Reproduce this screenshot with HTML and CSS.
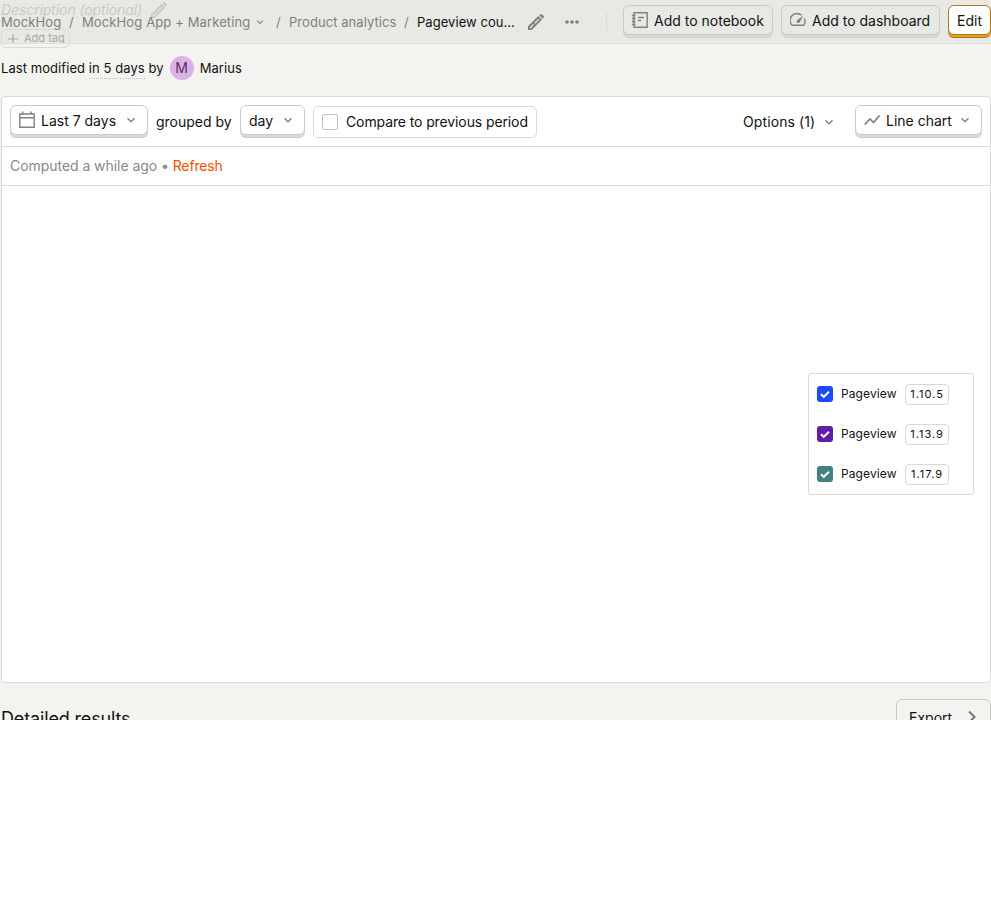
FILE: index.html
```html
<!DOCTYPE html>
<html lang="en">
<head>
<meta charset="utf-8">
<title>Pageview count</title>
<link rel="stylesheet" href="styles.css">
</head>
<body>
<svg class="defs" aria-hidden="true">
  <symbol id="chev" viewBox="0 0 24 24"><path d="M5 8.500l7 7 7-7" fill="none" stroke="currentColor" stroke-width="2.600"/></symbol>
  <symbol id="pencil" viewBox="0 0 24 24"><path fill="currentColor" fill-rule="evenodd" d="M0 18.500L15.500 3l5.500 5.500L5.500 24H0zM2.700 20v1.300H4L9 16.300l-1.300-1.300zM9.500 13.200l1.300 1.300 6.400-6.200-1.400-1.300zM16.800 2.200L18.500.6q1.200-1 2.400 0L23.400 3.100q1.200 1.200 0 2.400L21.800 7.200z"/></symbol>
</svg>
<div class="app">
  <header class="topbar">
    <nav class="crumbs">
      <a class="c1">MockHog</a><i>/</i>
      <a class="c2"><span>MockHog App + Marketing</span><svg class="chev small"><use href="#chev"/></svg></a><i>/</i>
      <a class="c3">Product analytics</a><i>/</i>
      <b>Pageview cou...</b>
    </nav>
    <svg class="edit-name"><use href="#pencil"/></svg>
    <svg class="more" viewBox="0 0 14 4"><circle cx="2" cy="2" r="1.800"/><circle cx="7" cy="2" r="1.800"/><circle cx="12" cy="2" r="1.800"/></svg>
    <span class="divider"></span>
    <button class="btn notebook"><svg class="ic" viewBox="0 0 16 16"><path d="M2 .7h13.200v14.600H2zM0 3.500h3.500M0 6.500h3.500M0 9.500h3.500M0 12.500h3.500M6 5.500h6M6 8.500h3"/></svg><span>Add to notebook</span></button>
    <button class="btn dashboard"><svg class="ic" viewBox="0 0 16 16"><path d="M11.500 3.300A6.800 6.800 0 0 0 2.200 13.300h11.600A6.800 6.800 0 0 0 14.400 6.500"/><path class="solid" d="M13.500 3.500L9.500 10.400A1.500 1.500 0 1 1 7.100 8.200z"/></svg><span>Add to dashboard</span></button>
    <button class="btn primary"><span>Edit</span></button>
  </header>

  <main>
    <section class="meta">
      <div class="description"><em>Description (optional)</em><svg><use href="#pencil"/></svg></div>
      <div class="tag"><svg viewBox="0 0 10 10"><path d="M5 0v10M0 5h10"/></svg><span>Add tag</span></div>
      <div class="modified"><span>Last modified <u>in 5 days</u> by</span><span class="avatar">M</span><span>Marius</span></div>
    </section>

    <section class="card">
      <div class="filters">
        <button class="btn range"><svg class="ic cal" viewBox="0 0 16 18"><path d="M.8 3h14.400v13.200H.8zM.8 6.800h14.400M3.800 .5V3M12.200 .5V3"/></svg><span>Last 7 days</span><svg class="chev"><use href="#chev"/></svg></button>
        <span class="grouped">grouped by</span>
        <button class="btn day"><span>day</span><svg class="chev"><use href="#chev"/></svg></button>
        <label class="compare"><span class="box"></span><span>Compare to previous period</span></label>
        <div class="options"><span>Options (1)</span><svg class="chev"><use href="#chev"/></svg></div>
        <button class="btn chart"><svg class="ic line" viewBox="0 0 16 12"><path d="M.7 10.500L6 5l3.500 3.500L15.500 1.500"/></svg><span>Line chart</span><svg class="chev"><use href="#chev"/></svg></button>
      </div>
      <div class="computed"><span>Computed a while ago</span> <span class="dot">•</span> <a>Refresh</a></div>
      <div class="canvas">
        <ul class="legend">
          <li><span class="check blue"><svg viewBox="0 0 16 16"><path d="M4 8.200l2.700 2.700L12 5.700"/></svg></span><span>Pageview</span><code>1.10.5</code></li>
          <li><span class="check purple"><svg viewBox="0 0 16 16"><path d="M4 8.200l2.700 2.700L12 5.700"/></svg></span><span>Pageview</span><code>1.13.9</code></li>
          <li><span class="check teal"><svg viewBox="0 0 16 16"><path d="M4 8.200l2.700 2.700L12 5.700"/></svg></span><span>Pageview</span><code>1.17.9</code></li>
        </ul>
      </div>
    </section>

    <section class="details">
      <h2>Detailed results</h2>
      <button class="btn export"><span>Export</span><svg viewBox="0 0 8 14"><path d="M1 1.500L6.500 7 1 12.500"/></svg></button>
    </section>
  </main>
</div>
</body>
</html>
```

FILE: styles.css
```css
* { box-sizing: border-box; }
body { margin: 0; background: #fff; color: #111; font: 14px/20px Inter, sans-serif; }
svg { display: block; flex: none; }
.defs { position: absolute; width: 0; height: 0; }
.app { position: relative; height: 720px; overflow: hidden; background: #f3f4ef; }
.topbar { position: absolute; z-index: 2; top: 0; left: 0; right: 0; height: 44px; padding: 5px 0 0 1px; display: flex; align-items: flex-start; border-bottom: 1px solid #dfe0da; }
.crumbs { display: flex; width: 515px; margin-top: 7px; font-size: 13px; letter-spacing: .12px; color: #7f807c; white-space: nowrap; }
.crumbs i { font-style: normal; width: 21px; text-align: center; }
.crumbs b { font-weight: 400; color: #111; letter-spacing: .05px; }
.c1 { width: 60px; }
.c2 { width: 186px; display: flex; align-items: center; }
.c2 span { width: 168px; }
.c3 { width: 107px; letter-spacing: .06px; }
.chev { width: 12px; height: 12px; color: #808080; }
.chev.small { width: 10px; height: 10px; margin-left: 5px; }
.edit-name { width: 16px; height: 16px; margin: 9px 0 0 12px; color: #7f807c; }
.more { width: 14px; height: 4px; margin: 15px 0 0 21px; fill: #7f807c; }
.divider { width: 1px; height: 17px; margin: 8px 16px 0 27px; background: #d8d9d3; }
.btn { display: flex; align-items: center; flex: none; height: 30px; margin: 0; padding: 0 8px; border: 1px solid #c9cac8; border-radius: 6px; background: #fff; color: #111; font: 14px/20px Inter, sans-serif; white-space: nowrap; }
.btn span { padding-top: 2px; }
.topbar .btn { background: #e8e9e4; box-shadow: 0 2px 0 #dcdad9, 0 3px 0 #cfd0cc; }
.ic { width: 16px; height: 16px; margin-right: 6px; fill: none; stroke: #808080; stroke-width: 1.400; }
.ic .solid { fill: #808080; stroke: none; }
.topbar .notebook { width: 150px; }
.topbar .dashboard { width: 159px; margin-left: 8px; }
.topbar .primary { width: 43px; margin-left: 8px; background: #fff; border-color: #b17816; box-shadow: 0 2px 0 #e99b23, 0 3px 0 #b17816; }

.meta { height: 96px; padding-left: 1px; }
.meta::before { content: ""; position: absolute; left: 0; right: 0; top: 0; height: 43px; background: #e8e9e4; }
.description { position: relative; display: flex; height: 20px; color: #c8c9c4; align-items: center; }
.description em { width: 141px; white-space: nowrap; letter-spacing: -.1px; }
.description svg { width: 16px; height: 16px; margin-left: 9px; }
.tag { position: relative; display: flex; align-items: center; width: 69px; height: 19px; margin-top: 9px; padding-left: 6px; border: 1px solid #d9dad4; border-radius: 5px; color: #a7a8a3; font-size: 11px; line-height: 13px; }
.tag svg { width: 10px; height: 10px; margin-right: 6px; stroke: #a7a8a3; stroke-width: 1.200; fill: none; }
.tag span { height: 13px; overflow: hidden; }
.modified { display: flex; align-items: center; height: 24px; margin-top: 8px; font-size: 13px; letter-spacing: .07px; }
.modified u { text-decoration: none; display: inline-block; line-height: 19px; border-bottom: 1px dotted #c4c5c0; }
.avatar { width: 24px; height: 24px; margin: 0 6px; border-radius: 50%; background: #dcb1e3; color: #572e5e; font-size: 14px; line-height: 24px; text-align: center; }
.card { height: 587px; margin-left: 1px; border: 1px solid #d9dad3; border-radius: 4px; background: #fff; overflow: hidden; }
.filters { display: flex; height: 50px; padding: 8px 8px 0; border-bottom: 1px solid #d9dad3; }
.filters .btn { box-shadow: 0 2px 0 #dcd9dc, 0 3px 0 #c9cac8; }
.filters .btn .chev { margin: 0 2px 0 auto; }
.filters .range { width: 138px; }
.ic.cal { height: 18px; margin-right: 6px; }
.filters .day { width: 65px; }
.grouped { width: 76px; margin: 7px 8px 0; white-space: nowrap; }
.compare { display: flex; align-items: center; width: 224px; height: 32px; margin: 1px 0 0 8px; padding-left: 8px; border: 1px solid #d9dad3; border-radius: 5px; white-space: nowrap; letter-spacing: -.11px; }
.box { width: 16px; height: 16px; margin-right: 8px; border: 1px solid #bfc0bb; border-radius: 2px; }
.options { display: flex; align-items: center; justify-content: space-between; width: 92px; height: 20px; margin: 7px 20px 0 auto; white-space: nowrap; letter-spacing: .1px; }
.filters .chart { width: 127px; }
.ic.line { height: 12px; margin-right: 6px; stroke-width: 1.700; }
.computed { height: 39px; padding: 9px 8px; border-bottom: 1px solid #d9dad3; color: #888; letter-spacing: -.05px; }
.computed a { color: #f54e00; letter-spacing: -.15px; }
.canvas { display: flex; justify-content: flex-end; padding: 187px 16px 0; }
.legend { width: 166px; height: 122px; margin: 0; padding: 0 8px; border: 1px solid #d9dad3; border-radius: 3px; list-style: none; }
.legend li { display: flex; align-items: center; height: 40px; font-size: 12px; letter-spacing: .1px; }
.check { width: 16px; height: 16px; margin-right: 8px; border-radius: 3px; }
.check path { fill: none; stroke: #fff; stroke-width: 2; }
.blue { background: #1d4aff; }
.purple { background: #621da6; }
.teal { background: #42827e; }
.legend code { width: 44px; height: 21px; margin-left: 8px; border: 1px solid #d9dad3; border-radius: 4px; font: 11px/19px Inter, sans-serif; letter-spacing: 1px; padding-left: 1px; text-align: center; }
.details { display: flex; justify-content: space-between; padding: 16px 0 0 1px; }
.details h2 { margin: 6px 0 0; font-size: 18px; line-height: 28px; font-weight: 400; letter-spacing: -.15px; }
.export { width: 95px; height: 36px; padding: 0 14px 0 12px; justify-content: space-between; background: #f3f4ef; }
.export svg { width: 8px; height: 14px; fill: none; stroke: #777873; stroke-width: 2; }
```
